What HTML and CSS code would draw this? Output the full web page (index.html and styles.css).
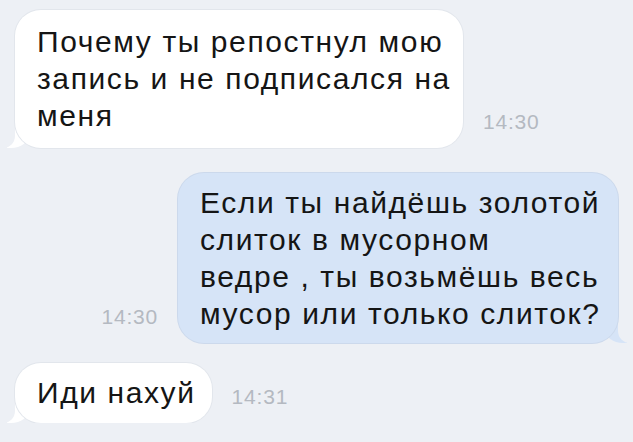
FILE: index.html
```html
<!DOCTYPE html>
<html lang="ru">
<head>
<meta charset="UTF-8">
<meta name="viewport" content="width=device-width, initial-scale=1.0">
<title>Сообщения</title>
<link rel="stylesheet" href="styles.css">
</head>
<body>
<div class="chat">
 <!-- входящее -->
 <div class="row in first">
 <div class="bubble in-bubble b1">Почему ты репостнул мою запись и не подписался на меня</div>
 <span class="time">14:30</span>
 </div>
 <!-- исходящее -->
 <div class="row out second">
 <span class="time">14:30</span>
 <div class="bubble out-bubble b2">Если ты найдёшь золотой<br>слиток в мусорном<br>ведре , ты возьмёшь весь<br>мусор или только слиток?</div>
 </div>
 <div class="row in third">
 <div class="bubble in-bubble b3">Иди нахуй</div>
 <span class="time">14:31</span>
 </div>
</div>
</body>
</html>
```
FILE: styles.css
```css
body {
 margin: 0;
 background-color: #edf0f5;
 font-family: "Liberation Sans", Arial, sans-serif;
}
.chat {
 position: relative;
 z-index: 0;
 padding: 10px 15px 0 15px;
}
.row {
 display: flex;
 align-items: flex-end;
 gap: 20px;
}
.row.out {
 justify-content: flex-end;
}
.second {
 margin-top: 25px;
}
.third {
 margin-top: 20px;
}
.bubble {
 position: relative;
 font-size: 30px;
 line-height: 37px;
 letter-spacing: 1.6px;
 color: #151515;
 border-radius: 26px;
 box-sizing: border-box;
 white-space: nowrap;
}
.b1 {
 white-space: normal;
}
.in-bubble {
 background-color: #ffffff;
 box-shadow: 0 0 0 1px #e2e6ec;
}
.out-bubble {
 background-color: #d6e4f7;
 box-shadow: 0 0 0 1px #ccd9ec;
}
.b1 {
 width: 448px;
 padding: 13px 8px 14px 22px;
}
.b2 {
 width: 440px;
 padding: 11px 6px 11px 22px;
}
.b3 {
 padding: 11px 16px 12px 22px;
}
/* хвостики */
.in-bubble::before,
.out-bubble::before {
 content: "";
 position: absolute;
 bottom: 0;
 width: 22px;
 height: 24px;
 z-index: -1;
}
.in-bubble::before {
 left: -8px;
 background-color: #ffffff;
 border-bottom-right-radius: 18px 14px;
}
.out-bubble::before {
 right: -9px;
 background-color: #d6e4f7;
 border-bottom-left-radius: 18px 14px;
}
.in-bubble::after,
.out-bubble::after {
 content: "";
 position: absolute;
 bottom: 0;
 width: 12px;
 height: 26px;
 background-color: #edf0f5;
 z-index: -1;
}
.in-bubble::after {
 left: -12px;
 border-bottom-right-radius: 12px;
}
.out-bubble::after {
 right: -12px;
 border-bottom-left-radius: 12px;
}
.time {
 font-size: 21px;
 color: #b4b9c1;
 padding-bottom: 14px;
 letter-spacing: 0.8px;
}
```
